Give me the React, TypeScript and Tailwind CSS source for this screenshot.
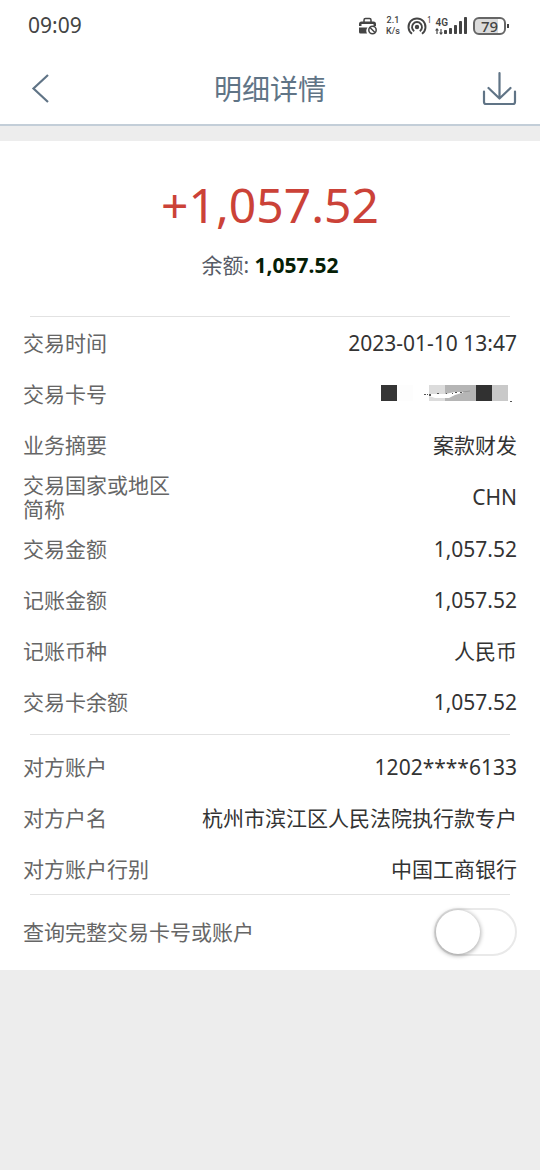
import { useState } from 'react';

type Row = { label: string; value: string; masked?: boolean };

const transactionRows: Row[] = [
  { label: '交易时间', value: '2023-01-10 13:47' },
  { label: '交易卡号', value: '', masked: true },
  { label: '业务摘要', value: '案款财发' },
  { label: '交易国家或地区简称', value: 'CHN' },
  { label: '交易金额', value: '1,057.52' },
  { label: '记账金额', value: '1,057.52' },
  { label: '记账币种', value: '人民币' },
  { label: '交易卡余额', value: '1,057.52' },
];

const counterpartyRows: Row[] = [
  { label: '对方账户', value: '1202****6133' },
  { label: '对方户名', value: '杭州市滨江区人民法院执行款专户' },
  { label: '对方账户行别', value: '中国工商银行' },
];

function MaskedCard() {
  return (
    <svg width="132" height="20" viewBox="0 0 132 20" role="img" aria-label="卡号已隐藏" shapeRendering="crispEdges">
      <rect x="0" y="1" width="16" height="16" fill="#353535" />
      <rect x="16" y="1" width="16" height="16" fill="#fdfdfd" />
      <rect x="48" y="1" width="16" height="16" fill="#dcdcdc" />
      <rect x="64" y="1" width="31" height="16" fill="#b5b5b5" />
      <rect x="95" y="1" width="16" height="16" fill="#313131" />
      <rect x="111" y="1" width="16" height="16" fill="#c9c9c9" />
      <path d="M48 10h16l10-2h10l-10 3-6 3H54l-6-2z" fill="#fff" shapeRendering="auto" />
      <path d="M43 10h2v1h-2zM46 10h1v1h-1zM48 10h2v2h-2zM56 9h2v1h-2zM65 9h1v1h-1zM71 9h1v1h-1zM74 8h2v1h-2zM79 8h2v1h-2zM129 17h2v1h-2z" fill="#555" />
      <path d="M82 8l7-1" stroke="#999" shapeRendering="auto" />
    </svg>
  );
}

function StatusBar() {
  return (
    <div className="flex h-[52px] items-center justify-between pr-[31px] pl-7 text-[#444]">
      <span className="text-[21px]">09:09</span>
      <div className="flex items-center">
        <svg width="20" height="20" viewBox="0 0 20 20" fill="none" aria-hidden="true">
          <path d="M6 6V4a1.500 1.500 0 0 1 1.500-1.500h4A1.500 1.500 0 0 1 13 4v2" stroke="currentColor" strokeWidth="1.500" />
          <path d="M1 10V8a2.500 2.500 0 0 1 2.500-2.500h12A2.500 2.500 0 0 1 18 8v2h-2.500V8H3.500v2z" fill="currentColor" />
          <path d="M1 11.500h8.500a5.500 5.500 0 0 0-.500 6H2.500A1.500 1.500 0 0 1 1 16z" fill="currentColor" />
          <circle cx="14.500" cy="14" r="3.700" stroke="currentColor" strokeWidth="1.500" />
          <path d="M12 11.500l5 5" stroke="currentColor" strokeWidth="1.500" />
        </svg>
        <div className="ml-[6px] flex w-[18px] flex-col text-center font-['Roboto',sans-serif] text-[9px] leading-[11px] font-medium">
          <span>2.1</span>
          <span>K/s</span>
        </div>
        <svg className="ml-[5px]" width="20" height="20" viewBox="0 0 20 20" fill="none" stroke="currentColor" strokeWidth="1.900" aria-hidden="true">
          <circle cx="10" cy="11" r="2.200" fill="currentColor" stroke="none" />
          <path d="M7.200 15.200a5 5 0 1 1 5.600 0" />
          <path d="M5 17.800a8.500 8.500 0 1 1 10 0" />
        </svg>
        <span className="mb-3 text-[8px] leading-none">1</span>
        <div className="ml-1 flex flex-col">
          <span className="font-['Roboto',sans-serif] text-[10px] leading-[11px] font-semibold">4G</span>
          <svg width="8" height="7" viewBox="0 0 8 7" fill="currentColor" aria-hidden="true">
            <path d="M2 0L0 2.500h1.400V6h1.200V2.500H4zM6 7l2-2.500H6.600V1H5.400v3.500H4z" />
          </svg>
        </div>
        <svg className="-ml-1" width="23" height="18" viewBox="0 0 23 18" fill="currentColor" aria-hidden="true">
          <rect x="0" y="13" width="3" height="4" rx="0.800" />
          <rect x="5" y="11" width="3" height="6" rx="0.800" />
          <rect x="10" y="8" width="3" height="9" rx="0.800" />
          <rect x="15" y="4" width="3" height="13" rx="0.800" />
          <rect x="20" y="0" width="3" height="17" rx="0.800" />
        </svg>
        <div className="ml-[6px] flex items-center gap-px">
          <div className="flex h-[18px] w-[33px] items-center justify-center rounded-[6px] border-2 border-[#666] bg-linear-to-r from-[#dcdcdc] from-79% to-white to-79% text-[15px] leading-none font-medium">
            79
          </div>
          <span className="h-1 w-[2px] bg-[#444]" />
        </div>
      </div>
    </div>
  );
}

function Divider() {
  return <hr className="mx-[30px] border-t border-[#e2e2e2]" />;
}

function DetailList({ rows }: { rows: Row[] }) {
  return (
    <dl className="px-[23px] text-[21px] leading-6">
      {rows.map((row) => (
        <div key={row.label} className="flex min-h-[51px] items-center justify-between pt-[3px] pb-[2px]">
          <dt className="max-w-[150px] text-[#666]">{row.label}</dt>
          <dd className="text-right whitespace-nowrap text-[#333]">
            {row.masked ? <div className="pr-1"><MaskedCard /></div> : row.value}
          </dd>
        </div>
      ))}
    </dl>
  );
}

export default function App() {
  const [showFull, setShowFull] = useState(false);

  return (
    <div className="min-h-screen bg-[#ededed] font-['Noto_Sans','Noto_Sans_CJK_SC',sans-serif]">
      <header className="border-b-2 border-[#c3ced8] bg-white">
        <StatusBar />
        <div className="flex h-[72px] items-center justify-between px-[23px] text-[#607486]">
          <button type="button" aria-label="返回" className="flex w-9 items-center pl-[7px]">
            <svg width="20" height="30" viewBox="0 0 20 30" fill="none" stroke="currentColor" strokeWidth="2.200">
              <path d="M18 2L3.500 15.500 18 29" />
            </svg>
          </button>
          <h1 className="pt-[2px] text-[28px] leading-9">明细详情</h1>
          <button type="button" aria-label="下载" className="flex w-9 justify-end">
            <svg width="36" height="36" viewBox="0 0 36 36" fill="none" stroke="currentColor" strokeWidth="2.200" strokeLinecap="round" strokeLinejoin="round">
              <path d="M18.500 3v25M7.500 18l11 10.500L29.500 18M3 21.500V32a2 2 0 0 0 2 2h27a2 2 0 0 0 2-2V21.500" />
            </svg>
          </button>
        </div>
      </header>

      <main className="mt-[15px] bg-white">
        <section className="flex flex-col items-center pt-8 pb-[35px]">
          <p className="text-[48px] leading-[64px] text-[#cb4238]">+1,057.52</p>
          <p className="mt-3 text-[21px] leading-8 text-[#565b66]">
            余额: <strong className="font-bold text-[#062006]">1,057.52</strong>
          </p>
        </section>

        <Divider />
        <div className="pb-[7px]">
          <DetailList rows={transactionRows} />
        </div>
        <Divider />
        <div className="pt-[6px]">
          <DetailList rows={counterpartyRows} />
        </div>
        <Divider />

        <div className="flex h-[75px] items-center justify-between px-[23px] pb-[2px]">
          <label htmlFor="show-full" className="text-[21px] leading-6 text-[#666]">查询完整交易卡号或账户</label>
          <input
            id="show-full"
            type="checkbox"
            role="switch"
            checked={showFull}
            onChange={(e) => setShowFull(e.target.checked)}
            className="flex h-12 w-[83px] cursor-pointer appearance-none items-center rounded-full border-2 border-[#e9e9e9] bg-white before:block before:size-11 before:rounded-full before:bg-white before:shadow-[0_1px_4px_1px_rgba(0,0,0,0.3)] checked:justify-end checked:bg-[#d8e6f2]"
          />
        </div>
      </main>
    </div>
  );
}
